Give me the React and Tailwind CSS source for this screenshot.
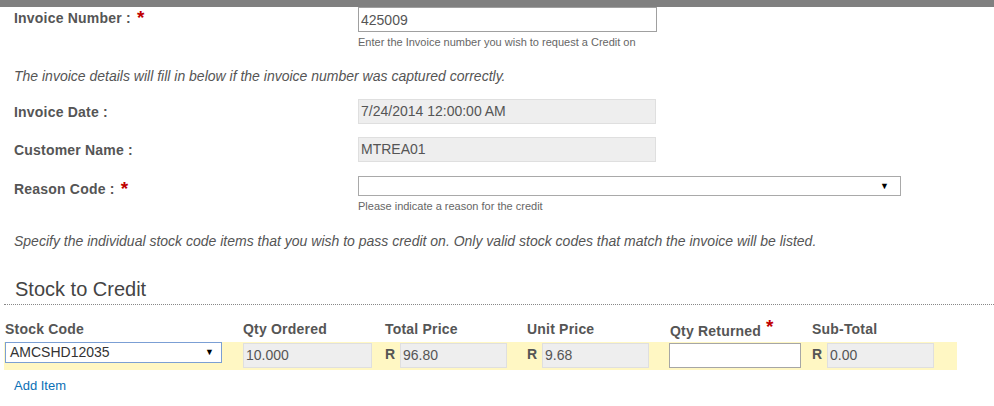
import React from 'react';

const Req = ({ className = '' }) => (
  <span className={`text-[#c00000] font-bold text-[19px] leading-none relative ${className}`}>*</span>
);

const labelCls = 'w-[358px] pl-[14px] text-[14px] leading-4 font-bold text-[#555] tracking-[0.2px]';

const GrayBox = ({ value, className = '' }) => (
  <div className={`h-[25px] bg-[#eeeeee] border border-[#dfdfdf] px-[2px] flex items-center text-[14px] text-[#555] ${className}`}>
    {value}
  </div>
);

const Money = ({ value }) => (
  <div className="flex items-start">
    <span className="w-[15px] mt-[4px] text-[14px] leading-4 font-bold text-[#555]">R</span>
    <GrayBox value={value} className="w-[107px] mt-[1px]" />
  </div>
);

const App = () => {
  return (
    <div className="w-[994px] h-[406px] overflow-hidden bg-white font-['Liberation_Sans',Arial,sans-serif]">
      <div className="h-[7px] bg-[#808080]" />

      {/* invoice number */}
      <div className="flex">
        <div className={labelCls}>
          Invoice Number : <Req className="top-[1px] ml-[2px]" />
        </div>
        <div>
          <input
            type="text"
            readOnly
            value="425009"
            className="block w-[299px] h-[25px] border border-[#a0a0a0] px-[2px] text-[14px] text-[#555] outline-none"
          />
          <p className="mt-[4px] text-[11px] leading-[12px] text-[#666]">
            Enter the Invoice number you wish to request a Credit on
          </p>
        </div>
      </div>

      <p className="mt-[20px] pl-[14px] text-[14px] leading-4 italic text-[#555]">
        The invoice details will fill in below if the invoice number was captured correctly.
      </p>

      <div className="mt-[15px] flex items-center">
        <div className={labelCls}>Invoice Date :</div>
        <GrayBox value="7/24/2014 12:00:00 AM" className="w-[298px]" />
      </div>

      <div className="mt-[13px] flex items-center">
        <div className={labelCls}>Customer Name :</div>
        <GrayBox value="MTREA01" className="w-[298px]" />
      </div>

      {/* reason code */}
      <div className="mt-[14px] flex">
        <div className={`${labelCls} pt-[2px]`}>
          Reason Code : <Req className="top-[1px] ml-[2px]" />
        </div>
        <div>
          <div className="w-[543px] h-[20px] border border-[#a9a9a9] flex items-center justify-end pr-[11px]">
            <span className="text-[9px] leading-none text-black">▼</span>
          </div>
          <p className="mt-[4px] text-[11px] leading-[12px] text-[#666]">
            Please indicate a reason for the credit
          </p>
        </div>
      </div>

      <p className="mt-[21px] pl-[14px] text-[14px] leading-4 italic text-[#555]">
        Specify the individual stock code items that you wish to pass credit on. Only valid stock codes that match the invoice will be listed.
      </p>

      {/* stock to credit */}
      <div className="mt-[28px] ml-[4px] pl-[11px] pb-[3px] border-b border-dotted border-[#888]">
        <h2 className="text-[20px] leading-6 text-[#444]">Stock to Credit</h2>
      </div>

      <div className="mt-[16px] ml-[5px] grid grid-cols-[238px_142px_142px_142px_143px_145px] h-[16px] text-[14px] leading-4 font-bold text-[#555] tracking-[0.2px]">
        <div>Stock Code</div>
        <div>Qty Ordered</div>
        <div>Total Price</div>
        <div>Unit Price</div>
        <div className="flex items-start">
          <span className="relative top-[2px] left-[1px]">Qty Returned</span>
          <Req className="-top-[4px] ml-[6px]" />
        </div>
        <div>Sub-Total</div>
      </div>

      <div className="mt-[5px] ml-[4px] w-[953px] h-[28px] bg-[#fff7c3] pl-[1px] grid grid-cols-[238px_142px_142px_142px_143px_145px] items-start">
        <div className="w-[217px] h-[21px] border border-[#7b9fd4] bg-white flex items-center justify-between pl-[4px] pr-[7px] text-[14px] text-[#333]">
          <span>AMCSHD12035</span>
          <span className="text-[9px] leading-none text-black">▼</span>
        </div>
        <GrayBox value="10.000" className="w-[129px] mt-[1px]" />
        <Money value="96.80" />
        <Money value="9.68" />
        <input
          type="text"
          className="mt-[1px] w-[132px] h-[25px] border border-[#a6a6a6] bg-white outline-none"
        />
        <Money value="0.00" />
      </div>

      <a href="#" className="block mt-[8px] pl-[14px] text-[13px] leading-[15px] text-[#0a6fb6]">
        Add Item
      </a>
    </div>
  );
};

export default App;
